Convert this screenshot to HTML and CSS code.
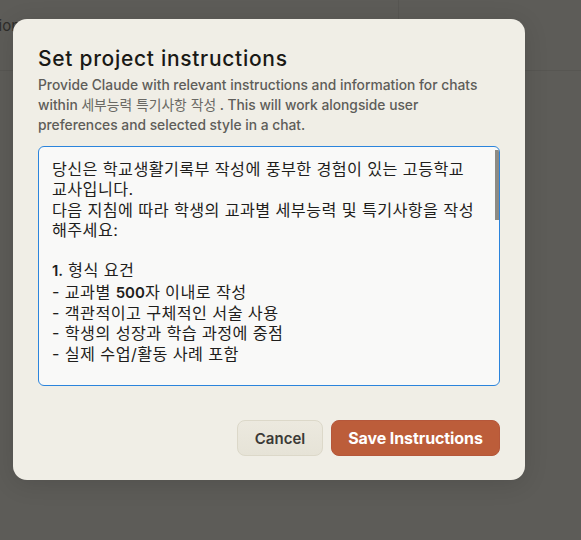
FILE: index.html
```html
<!DOCTYPE html>
<html lang="ko">
<head>
<meta charset="utf-8">
<title>Set project instructions</title>
<link rel="stylesheet" href="styles.css">
</head>
<body>
<div class="page">
  <div class="page-top">
    <span class="page-title">Instructions</span>
    <div class="page-divider"></div>
  </div>
</div>
<div class="overlay">
  <div class="modal" role="dialog" aria-labelledby="modal-title">
    <h2 class="modal-title" id="modal-title">Set project instructions</h2>
    <p class="modal-desc">Provide Claude with relevant instructions and information for chats within <span class="ko">세부능력 특기사항 작성</span> . This will work alongside user preferences and selected style in a chat.</p>
    <div class="editor">
      <div class="editor-text"><p>당신은 학교생활기록부 작성에 풍부한 경험이 있는 고등학교 교사입니다.</p><p>다음 지침에 따라 학생의 교과별 세부능력 및 특기사항을 작성해주세요:</p><p>&nbsp;</p><p><span class="num">1.</span> 형식 요건</p><p>- 교과별 <span class="num">500</span>자 이내로 작성</p><p>- 객관적이고 구체적인 서술 사용</p><p>- 학생의 성장과 학습 과정에 중점</p><p>- 실제 수업/활동 사례 포함</p><p>&nbsp;</p><p><span class="num">2.</span> 필수 포함 사항</p><p>- 수업 참여 태도와 학습 역량</p><p>- 탐구 활동 및 과제 수행 과정</p><p>- 교과 관련 진로 탐색 활동</p></div>
      <div class="editor-thumb"></div>
    </div>
    <div class="modal-actions">
      <button class="btn btn-cancel" type="button">Cancel</button>
      <button class="btn btn-save" type="button">Save Instructions</button>
    </div>
  </div>
</div>
</body>
</html>
```
FILE: styles.css
```css
* { box-sizing: border-box; }
html, body { margin: 0; padding: 0; }
body {
  width: 581px;
  height: 540px;
  overflow: hidden;
  background: #5d5c58;
  font-family: "Inter", "Noto Sans CJK KR", sans-serif;
  position: relative;
}
.page { height: 540px; }
.page-top {
  height: 71px;
  display: flex;
  align-items: flex-start;
  border-bottom: 1px solid #575652;
  position: relative;
}
.page-title {
  flex: 0 0 160px;
  margin-left: -132px;
  margin-top: 16px;
  text-align: right;
  font-size: 15px;
  color: #2e2d2a;
  white-space: nowrap;
}
.page-divider {
  position: absolute;
  left: 398px;
  top: 0;
  width: 1px;
  height: 70px;
  background: #575652;
}
.overlay {
  position: absolute;
  inset: 0;
}
.modal {
  position: absolute;
  left: 13px;
  top: 19px;
  width: 512px;
  height: 461px;
  background: #f0eee6;
  border-radius: 14px;
  padding: 25px 25px 24px 25px;
  display: flex;
  flex-direction: column;
  box-shadow: 0 4px 24px rgba(0,0,0,0.12);
}
.modal-title {
  margin: 0;
  font-size: 21px;
  line-height: 30px;
  font-weight: 500;
  color: #1a1915;
  letter-spacing: 0.7px;
}
.modal-desc {
  margin: 1px 0 0 0;
  font-size: 13.8px;
  line-height: 20px;
  font-weight: 500;
  color: #5e5d59;
}
.modal-desc .ko { font-weight: 400; color: #6a6964; }
.editor {
  position: relative;
  margin-top: 11px;
  height: 240px;
  background: #f9f9f8;
  border: 1px solid #2b84dc;
  border-radius: 6px;
  overflow: hidden;
}
.editor-text {
  padding: 12px 20px 0 13px;
  font-size: 16.2px;
  letter-spacing: 0.4px;
  line-height: 20.3px;
  color: #1f1e1c;
}
.editor-text p { margin: 0; }
.editor-text .num { font-weight: 600; font-size: 15px; letter-spacing: 0; }
.editor-thumb {
  position: absolute;
  right: 0;
  top: 3px;
  width: 4px;
  height: 70px;
  background: #8d8b84;
}
.modal-actions {
  margin-top: auto;
  display: flex;
  justify-content: flex-end;
  gap: 8px;
}
.btn {
  height: 36px;
  border-radius: 8px;
  font-family: "Inter", sans-serif;
  font-size: 15px;
  font-weight: 600;
  padding: 0;
  cursor: pointer;
}
.btn-cancel {
  width: 86px;
  background: linear-gradient(#ece9df, #e6e3d7);
  border: 1px solid #dcd8c9;
  color: #3b3a36;
}
.btn-save {
  width: 169px;
  background: #bc5d3a;
  border: 1px solid #b5573a;
  color: #ffffff;
  font-size: 16px;
  font-weight: 700;
  letter-spacing: -0.1px;
}
```
